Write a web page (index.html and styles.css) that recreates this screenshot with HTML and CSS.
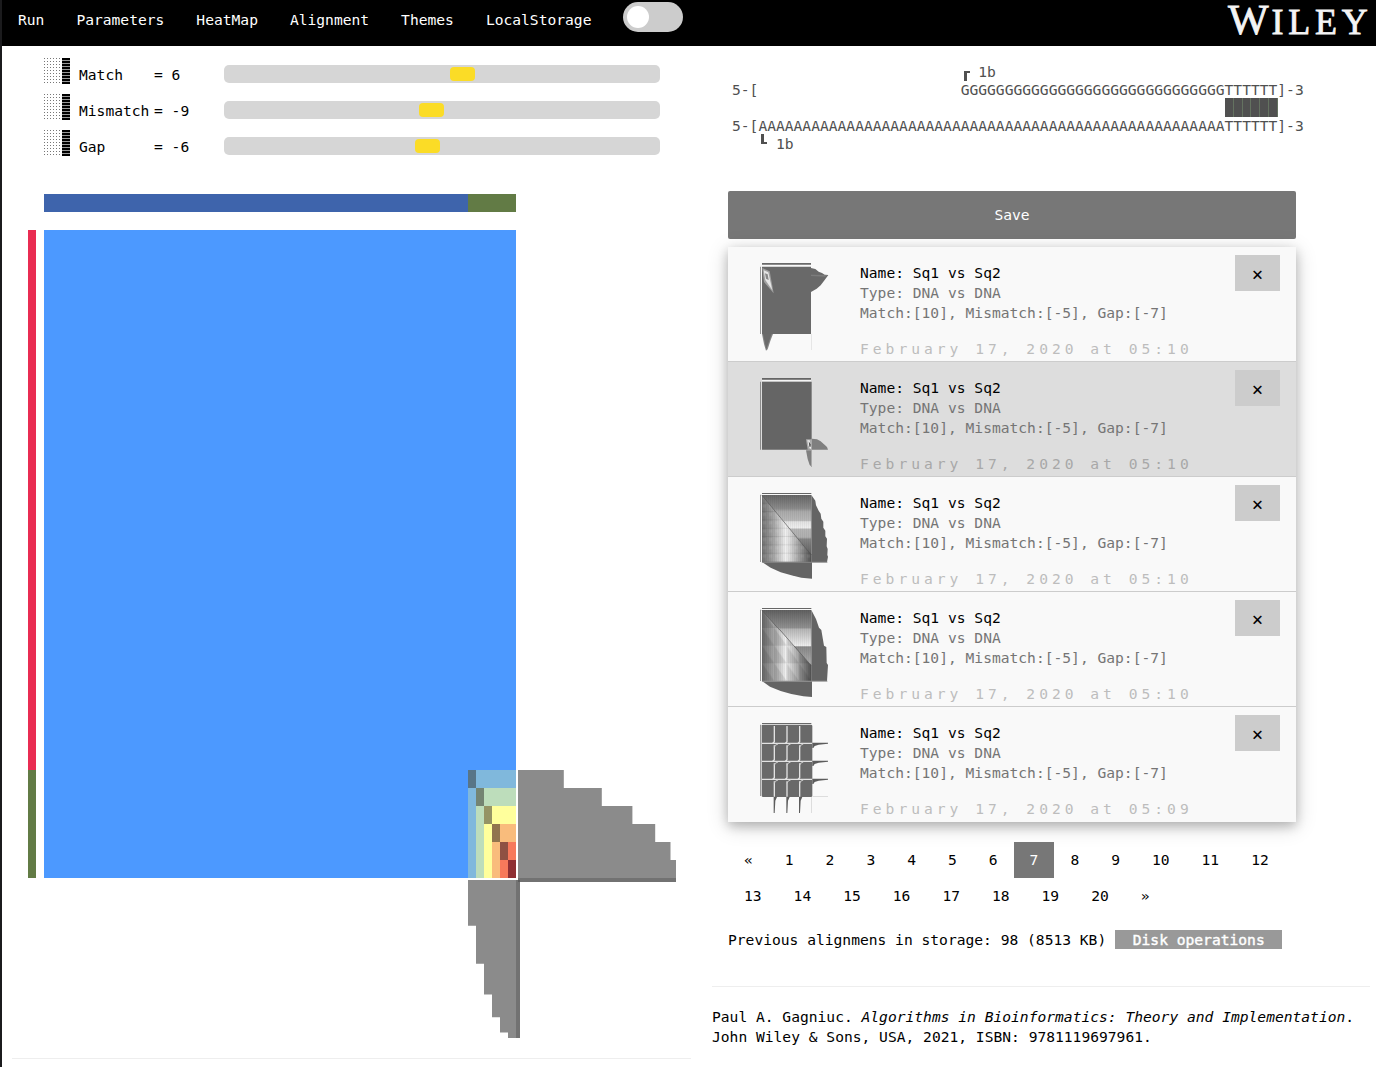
FILE: index.html
```html
<!DOCTYPE html>
<html lang="en">
<head>
<meta charset="utf-8">
<title>Sequence alignment</title>
<link rel="stylesheet" href="styles.css">
</head>
<body>
<header class="topbar">
  <nav class="menu">
    <a>Run</a><a>Parameters</a><a>HeatMap</a><a>Alignment</a><a>Themes</a><a>LocalStorage</a>
  </nav>
  <span class="toggle"><span class="knob"></span></span>
  <span class="logo">W<span class="caps">ILEY</span></span>
</header>
<main class="columns">
  <section class="left">
    <div class="params">
      <div class="param"><span class="shade"><i></i><b></b></span><span class="pname">Match</span><span class="pval">= 6</span><span class="track"><span class="thumb" style="margin-left:226px"></span></span></div>
      <div class="param"><span class="shade"><i></i><b></b></span><span class="pname">Mismatch</span><span class="pval">= -9</span><span class="track"><span class="thumb" style="margin-left:195px"></span></span></div>
      <div class="param"><span class="shade"><i></i><b></b></span><span class="pname">Gap</span><span class="pval">= -6</span><span class="track"><span class="thumb" style="margin-left:191px"></span></span></div>
    </div>
    <svg class="heatmap" width="648" height="845" viewBox="28 194 648 845">
      <path fill="#3e64ac" d="M44 194h424v18H44z"/>
      <path fill="#627b45" d="M468 194h48v18h-48zM28 770h8v108h-8z"/>
      <path fill="#e92c52" d="M28 230h8v540h-8z"/>
      <path fill="#4c99ff" d="M44 230h472v648H44z"/>
      <!-- nested score levels, each one cell in from the last -->
      <path fill="#80b8dc" d="M468 770h48v108h-48z"/>
      <path fill="#bdddbb" d="M476 788h40v90h-40z"/>
      <path fill="#ffff9c" d="M484 806h32v72h-32z"/>
      <path fill="#f9bc7c" d="M492 824h24v54h-24z"/>
      <path fill="#f7795b" d="M500 842h16v36h-16z"/>
      <!-- traceback diagonal -->
      <path fill="#587587" d="M468 770h8v18h-8z"/>
      <path fill="#748472" d="M476 788h8v18h-8z"/>
      <path fill="#959465" d="M484 806h8v18h-8z"/>
      <path fill="#91744f" d="M492 824h8v18h-8z"/>
      <path fill="#8f5143" d="M500 842h8v18h-8z"/>
      <path fill="#8f2f33" d="M508 860h8v18h-8z"/>
      <path fill="#8b8b8b" d="M518 770H563.8V788H601.8V806H632.4V824H655.2V842H670.5V860H676V878H518z"/>
      <path fill="#8b8b8b" d="M468 880V925.8H476V963.8H484V994.4H492V1017.2H500V1032.5H508V1038H516V880z"/>
      <path fill="#727272" d="M518 878H676V882H518zM516 880H520V1038H516z"/>
      <path fill="#5c5c5c" d="M518 880h2v2h-2z"/>
    </svg>
    <hr>
  </section>
  <section class="right">
    <div class="alignment">
      <div class="seq">                          <span class="mark"><span class="corner top"></span></span> 1b</div>
      <div class="seq">5-[                       GGGGGGGGGGGGGGGGGGGGGGGGGGGGGGTTTTTT]-3</div>
      <div class="seq"><span class="bars"></span></div>
      <div class="seq">5-[AAAAAAAAAAAAAAAAAAAAAAAAAAAAAAAAAAAAAAAAAAAAAAAAAAAAATTTTTT]-3</div>
      <div class="seq">   <span class="mark"><span class="corner bottom"></span></span> 1b</div>
    </div>
    <button class="save">Save</button>
    <ul class="records">
      <li>
        <svg class="preview" width="70" height="95" viewBox="96 60 210 285">
          <path fill="#696969" d="M102 69h147v5H102zM97 80h2v202h-2zM102 80h147v202H102z"/>
          <path fill="#696969" d="M249 84L262 87 272 95 282 99 290 104 301 105 290 120 278 136 266 146 249 156z"/>
          <path fill="#7c7c7c" d="M249 104L300 105 291 110 249 108z"/>
          <path fill="#858585" d="M102 282H135L128 300 124 312 119 328 114 332 108 312z"/>
          <path fill="#6a6a6a" d="M105 282H131L115 328z"/>
          <path fill="#a0a0a0" d="M103 84L125 94 137 160 108 126z"/>
          <path fill="#e5e5e5" d="M107 91L121 97 133 151 112 120z"/>
          <path fill="#888" d="M111 100L119 103 122 120 114 116z"/>
          <path fill="#ddd" d="M249 282h2v48h-2z"/>
        </svg>
        <div class="info"><p class="name">Name: Sq1 vs Sq2</p><p>Type: DNA vs DNA</p><p>Match:[10], Mismatch:[-5], Gap:[-7]</p><p class="date">February 17, 2020 at 05:10</p></div>
        <button class="close">×</button>
      </li>
      <li class="selected">
        <svg class="preview" width="70" height="95" viewBox="96 405 210 285">
          <path fill="#f4f4f4" d="M102 420h147v4H102z"/>
          <path fill="#656565" d="M102 414h147v5H102zM97 425h2v204h-2zM102 425h149v204H102z"/>
          <path fill="#7f7f7f" d="M252 596L267 598 278 604 288 613 297 621 300 629H252zM234 631H251V680L245 675 239 657z"/>
          <path fill="#aaa" d="M234 598H251V629H239z"/>
          <path fill="#eee" d="M238 601H245L250 625 246 627 241 616z"/>
          <path fill="#555" d="M242 604L248 613V620H244z"/>
          <path fill="#aaa" d="M249 599h3v82h-3z"/>
        </svg>
        <div class="info"><p class="name">Name: Sq1 vs Sq2</p><p>Type: DNA vs DNA</p><p>Match:[10], Mismatch:[-5], Gap:[-7]</p><p class="date">February 17, 2020 at 05:10</p></div>
        <button class="close">×</button>
      </li>
      <li>
        <svg class="preview" width="70" height="95" viewBox="96 45 210 285">
          <defs>
            <linearGradient id="v3" x1="0" y1="0" x2="0" y2="1"><stop offset="0" stop-color="#666"/><stop offset=".2" stop-color="#8b8b8b"/><stop offset=".25" stop-color="#aaa"/><stop offset=".38" stop-color="#b8b8b8"/><stop offset=".4" stop-color="#e2e2e2"/><stop offset=".49" stop-color="#eee"/><stop offset=".51" stop-color="#b5b5b5"/><stop offset=".63" stop-color="#b0b0b0"/><stop offset=".66" stop-color="#858585"/><stop offset="1" stop-color="#505050"/></linearGradient>
            <linearGradient id="h3"><stop offset="0" stop-color="#707070"/><stop offset=".25" stop-color="#a8a8a8"/><stop offset=".48" stop-color="#f0f0f0"/><stop offset=".57" stop-color="#d8d8d8"/><stop offset=".8" stop-color="#909090"/><stop offset="1" stop-color="#505050"/></linearGradient>
            <pattern id="scales" width="19" height="25" patternUnits="userSpaceOnUse" patternTransform="translate(102 61)"><path fill="#000" fill-opacity=".08" d="M0 22H19V25H0z"/><path fill="#fff" fill-opacity=".08" d="M2 3H12V12H2z"/></pattern>
            <pattern id="ribs" width="6" height="6" patternUnits="userSpaceOnUse"><path fill="#000" fill-opacity=".04" d="M0 0h3v6H0z"/></pattern>
          </defs>
          <path fill="#666" d="M102 54h148v3H102zM97 59h2v202h-2z"/>
          <path fill="url(#v3)" d="M102 60H250V261H102z"/>
          <path fill="url(#h3)" d="M102 61L250 238V261H102z"/>
          <path fill="url(#scales)" d="M102 61L250 238V261H102z"/>
          <path fill="url(#ribs)" d="M102 60H250V261H102z"/>
          <path fill="none" stroke="#555" stroke-width="2" d="M102 61L250 240"/>
          <path fill="#646464" d="M250 60L262 77 264 91 272 107 278 116 280 131 286 140 286 158 292 167 292 184 297 191 296 214 299 222 298 240 300 245 297 261H250z"/>
          <path fill="#646464" d="M102 261H252V311L220 308 190 301 158 292 128 278z"/>
          <path fill="#888" d="M102 260h196v3H102z"/>
        </svg>
        <div class="info"><p class="name">Name: Sq1 vs Sq2</p><p>Type: DNA vs DNA</p><p>Match:[10], Mismatch:[-5], Gap:[-7]</p><p class="date">February 17, 2020 at 05:10</p></div>
        <button class="close">×</button>
      </li>
      <li>
        <svg class="preview" width="70" height="95" viewBox="96 390 210 285">
          <defs>
            <linearGradient id="v4" x1="0" y1="0" x2="0" y2="1"><stop offset="0" stop-color="#606060"/><stop offset=".25" stop-color="#909090"/><stop offset=".27" stop-color="#b5b5b5"/><stop offset=".5" stop-color="#ececec"/><stop offset=".52" stop-color="#888"/><stop offset=".75" stop-color="#aaa"/><stop offset=".78" stop-color="#505050"/><stop offset="1" stop-color="#606060"/></linearGradient>
            <pattern id="steps" width="37" height="53" patternUnits="userSpaceOnUse" patternTransform="translate(102 406)"><path fill="#000" fill-opacity=".1" d="M0 0L37 53H0z"/></pattern>
          </defs>
          <path fill="#666" d="M102 399h148v3H102zM97 404h2v214h-2z"/>
          <path fill="url(#v4)" d="M102 405H250V618H102z"/>
          <path fill="url(#h3)" d="M102 406L250 572V618H102z"/>
          <path fill="url(#steps)" d="M102 406L250 572V618H102z"/>
          <path fill="url(#ribs)" d="M102 405H250V618H102z"/>
          <path fill="none" stroke="#555" stroke-width="2" d="M102 406L150 460 156 465 250 572"/>
          <path fill="#646464" d="M250 405L264 432 273 458 280 465 288 512 295 516 296 564 300 570 297 618H250z"/>
          <path fill="#646464" d="M102 618H252V666L226 664 190 657 158 648 126 635z"/>
          <path fill="#999" d="M102 617h196v3H102z"/>
        </svg>
        <div class="info"><p class="name">Name: Sq1 vs Sq2</p><p>Type: DNA vs DNA</p><p>Match:[10], Mismatch:[-5], Gap:[-7]</p><p class="date">February 17, 2020 at 05:10</p></div>
        <button class="close">×</button>
      </li>
      <li>
        <svg class="preview" width="70" height="95" viewBox="96 60 210 285">
          <path fill="#696969" d="M102 69h148v3H102zM97 74h2v214h-2zM101 76Q101 74 104 74H249Q253 74 253 78V287Q253 291 248 291H106Q101 291 101 287z"/>
          <path fill="none" stroke="#e2e2e2" stroke-width="4" d="M102 130H252M102 184H252M102 238H252M139 78V125L134 130M139 136V179L134 184M139 190V233L134 238M139 244V290M177 78V125L172 130M177 136V179L172 184M177 190V233L172 238M177 244V290M215 78V125L210 130M215 136V179L210 184M215 190V233L210 238M215 244V290"/>
          <path fill="none" stroke="#ccc" stroke-width="3" d="M139 142Q140 134 150 132M177 142Q178 134 188 132M215 142Q216 134 226 132M139 196Q140 188 150 186M177 196Q178 188 188 186M215 196Q216 188 226 186M139 250Q140 242 150 240M177 250Q178 242 188 240M215 250Q216 242 226 240"/>
          <path fill="#5c5c5c" d="M253 128H300V131L272 134 260 138 256 144H253zM253 182H300V185L272 188 260 192 256 198H253zM253 236H300V239L272 242 260 246 256 252H253z"/>
          <path fill="#5c5c5c" d="M137 291H147L142 302 140 339H137zM175 291H185L180 302 178 339H175zM213 291H223L218 302 216 339H213z"/>
          <path fill="#ddd" d="M253 288h47v3h-47zM249 292h3v47h-3z"/>
        </svg>
        <div class="info"><p class="name">Name: Sq1 vs Sq2</p><p>Type: DNA vs DNA</p><p>Match:[10], Mismatch:[-5], Gap:[-7]</p><p class="date">February 17, 2020 at 05:09</p></div>
        <button class="close">×</button>
      </li>
    </ul>
    <nav class="pages">
      <a>«</a><a>1</a><a>2</a><a>3</a><a>4</a><a>5</a><a>6</a><a class="current">7</a><a>8</a><a>9</a><a>10</a><a>11</a><a>12</a><a>13</a><a>14</a><a>15</a><a>16</a><a>17</a><a>18</a><a>19</a><a>20</a><a>»</a>
    </nav>
    <div class="storage">Previous alignmens in storage: 98 (8513 KB) <button class="disk">Disk operations</button></div>
    <hr>
    <footer>Paul A. Gagniuc. <em>Algorithms in Bioinformatics: Theory and Implementation</em>.<br>John Wiley &amp; Sons, USA, 2021, ISBN: 9781119697961.</footer>
  </section>
</main>
</body>
</html>
```
FILE: styles.css
```css
* {
  box-sizing: border-box;
}

html {
  background: #fff;
}

body {
  margin: 0;
  height: 1067px;
  overflow: hidden;
  border-left: 2px solid #1b1b1d;
  color: #000;
  font: 14.61px/20px "DejaVu Sans Mono", monospace;
}

p,
ul {
  margin: 0;
  padding: 0;
}

button {
  border: 0;
  padding: 0;
  font: inherit;
}

hr {
  width: 100%;
  height: 1px;
  margin: 0;
  border: 0;
  background: #eee;
}

.topbar {
  display: flex;
  align-items: flex-start;
  height: 46px;
  background: #000;
  color: #fff;
}

.menu {
  display: flex;
}

.menu a {
  padding: 10px 16px;
}

.toggle {
  width: 60px;
  height: 30px;
  margin: 2px 0 0 16px;
  padding: 4px;
  border-radius: 15px;
  background: #ccc;
}

.knob {
  display: block;
  width: 22px;
  height: 22px;
  border-radius: 50%;
  background: #fff;
}

.logo {
  width: 148px;
  margin-left: auto;
  color: #f4f4f4;
  font: 43px/40px "Liberation Serif", serif;
  white-space: nowrap;
  -webkit-text-stroke: 0.8px #f4f4f4;
}

.caps {
  margin-left: 3px;
  font-size: 36px;
  letter-spacing: 4.7px;
}

.columns {
  display: flex;
}

.left {
  width: 689px;
  padding: 12px 0 0 10px;
}

.params {
  height: 136px;
  padding-left: 32px;
}

.param {
  display: flex;
  height: 36px;
}

.shade {
  display: flex;
  width: 35px;
  height: 26px;
}

.shade i {
  width: 18px;
  background-image: linear-gradient(90deg, transparent 1px, #fff 1px), linear-gradient(#777 1px, #fff 1px);
  background-size: 3px 3px;
}

.shade b {
  width: 8px;
  background: repeating-linear-gradient(#000 0 2px, #999 2px 3px);
}

.pname {
  width: 75px;
  padding-top: 7px;
}

.pval {
  width: 70px;
  padding-top: 7px;
}

.track {
  width: 436px;
  height: 18px;
  margin-top: 7px;
  padding: 2px 0;
  border-radius: 5px;
  background: #d6d6d6;
}

.thumb {
  display: block;
  width: 25px;
  height: 14px;
  border-radius: 4px;
  background: #fbdc26;
}

.heatmap {
  display: block;
  margin: 0 0 19px 16px;
}

.right {
  width: 679px;
  padding: 17px 0 0 21px;
}

.alignment {
  height: 128px;
  padding-left: 20px;
  color: #505050;
}

.seq {
  display: flow-root;
  height: 18px;
  line-height: 18px;
  white-space: pre;
}

.mark {
  display: inline-block;
  width: 8.8px;
  height: 18px;
  vertical-align: top;
}

.corner {
  display: block;
  width: 6px;
  height: 10px;
  margin-left: 3px;
  border-left: 3px solid #505050;
}

.corner.top {
  margin-top: 8px;
  border-top: 2px solid #505050;
}

.corner.bottom {
  margin-top: -1px;
  border-bottom: 2px solid #505050;
}

.bars {
  display: block;
  width: 53px;
  height: 19px;
  margin: -1px 0 0 493px;
  background: repeating-linear-gradient(90deg, #505050 0 7.8px, #647260 7.8px 8.8px);
}

.save {
  display: block;
  width: 568px;
  height: 48px;
  margin-left: 16px;
  border-radius: 2px;
  background: #777;
  color: #fff;
}

.records {
  width: 568px;
  margin: 8px 0 0 16px;
  background: #f9f9f9;
  box-shadow: 0 4px 10px rgba(0, 0, 0, 0.2), 0 4px 20px rgba(0, 0, 0, 0.19);
  list-style: none;
}

.records li {
  display: flex;
  height: 115px;
  padding: 8px 16px 0 32px;
  border-bottom: 1px solid #ccc;
}

.records li:last-child {
  border-bottom: 0;
}

.records .selected {
  background: #ddd;
}

.preview {
  margin-top: 5px;
}

.info {
  flex: 1;
  padding: 8px 0 0 30px;
  color: #757575;
}

.info .name {
  color: #000;
}

.info .date {
  margin-top: 16px;
  color: #bdbdbd;
  letter-spacing: 4px;
}

.selected .date {
  color: #a8a8a8;
}

.close {
  width: 45px;
  height: 36px;
  padding-top: 1px;
  background: #ccc;
  color: #000;
  font-size: 19px;
}

.pages {
  display: flex;
  flex-wrap: wrap;
  width: 568px;
  margin: 20px 0 0 16px;
}

.pages a {
  height: 36px;
  padding: 8px 16px;
}

.pages .current {
  background: #777;
  color: #fff;
}

.storage {
  display: flex;
  gap: 9px;
  align-items: flex-start;
  height: 20px;
  margin: 16px 0 36px 16px;
}

.disk {
  width: 167px;
  height: 19px;
  background: #999;
  color: #fff;
  line-height: 19px;
  -webkit-text-stroke: 0.4px #fff;
}

.right hr {
  width: 658px;
}

footer {
  margin-top: 20px;
}
```
